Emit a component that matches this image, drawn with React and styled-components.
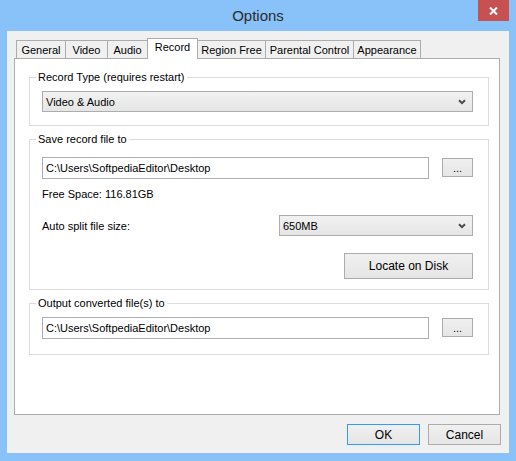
import styled, { createGlobalStyle } from 'styled-components';

const GlobalStyle = createGlobalStyle`
  html, body {
    margin: 0;
    padding: 0;
    background: #88c2f8;
  }
  body {
    font-family: "Liberation Sans", Arial, sans-serif;
    font-size: 11px;
    color: #000;
  }
`;

const Window = styled.div`
  width: 516px;
  height: 461px;
  background: #88c2f8;
  display: flex;
  flex-direction: column;
  box-sizing: border-box;
`;

const TitleBar = styled.div`
  position: relative;
  height: 31px;
  display: flex;
  align-items: center;
  justify-content: center;
  font-size: 15px;
  color: #2b2b2b;
  padding-bottom: 1px;
  box-sizing: border-box;
`;

const CloseButton = styled.div`
  position: absolute;
  top: 0;
  right: 7px;
  width: 31px;
  height: 21px;
  background: #c75050;
  display: flex;
  align-items: center;
  justify-content: center;
`;

const Client = styled.div`
  margin: 0 7px 8px 7px;
  flex: 1;
  background: #f0f0f0;
  padding: 7px 8px 8px 7px;
  display: flex;
  flex-direction: column;
  box-sizing: border-box;
`;

const TabRow = styled.div`
  display: flex;
  align-items: flex-end;
  height: 20px;
  padding-left: 2px;
  position: relative;
  z-index: 1;
`;

const Tab = styled.div`
  width: ${p => p.$w}px;
  height: ${p => (p.$active ? 21 : 18)}px;
  margin-left: -1px;
  margin-bottom: ${p => (p.$active ? -1 : 0)}px;
  box-sizing: border-box;
  border: 1px solid #acacac;
  border-bottom: none;
  background: ${p => (p.$active ? '#ffffff' : '#f0f0f0')};
  display: flex;
  justify-content: center;
  align-items: ${p => (p.$active ? 'flex-start' : 'center')};
  padding-top: ${p => (p.$active ? 2 : 0)}px;
  font-size: 11px;
  &:first-child {
    margin-left: 0;
  }
`;

const Panel = styled.div`
  height: 357px;
  margin-right: 1px;
  box-sizing: border-box;
  border: 1px solid #acacac;
  background: #fff;
  padding: 11px 0 0 14px;
  display: flex;
  flex-direction: column;
  gap: 6px;
`;

const Group = styled.fieldset`
  width: 460px;
  margin: 0;
  box-sizing: border-box;
  border: 1px solid #dcdcdc;
  padding: ${p => p.$top}px 15px ${p => p.$bottom}px 12px;
  min-inline-size: 0;
`;

const Legend = styled.legend`
  padding: 0 2px;
  margin-left: -6px;
  line-height: 14px;
  font-size: 11px;
`;

const Select = styled.div`
  height: 21px;
  width: ${p => (p.$w ? `${p.$w}px` : '100%')};
  box-sizing: border-box;
  border: 1px solid #acacac;
  background: linear-gradient(#f2f2f2, #e5e5e5);
  display: flex;
  align-items: center;
  justify-content: space-between;
  padding: 0 6px 0 3px;
`;

const Row = styled.div`
  display: flex;
  align-items: ${p => p.$align || 'center'};
  justify-content: ${p => p.$justify || 'space-between'};
  margin-top: ${p => p.$mt || 0}px;
`;

const TextBox = styled.div`
  width: 387px;
  height: 22px;
  box-sizing: border-box;
  border: 1px solid #abadb3;
  background: #fff;
  display: flex;
  align-items: center;
  padding-left: 3px;
`;

const Button = styled.div`
  width: ${p => p.$w}px;
  height: ${p => p.$h}px;
  box-sizing: border-box;
  border: 1px solid ${p => (p.$default ? '#3399ff' : '#acacac')};
  background: linear-gradient(#f0f0f0, #e5e5e5);
  display: flex;
  align-items: center;
  justify-content: center;
  font-size: ${p => p.$fs || 11}px;
  margin-top: ${p => p.$mt || 0}px;
`;

const Label = styled.div`
  line-height: 14px;
  margin-top: ${p => p.$mt || 0}px;
`;

const Footer = styled.div`
  display: flex;
  justify-content: flex-end;
  gap: 8px;
  margin-top: 9px;
`;

const Chevron = () => (
  <svg width="8" height="6" viewBox="0 0 8 6">
    <path d="M1 1.2 L4 4.2 L7 1.2" fill="none" stroke="#4a4a4a" strokeWidth="2" />
  </svg>
);

const CloseGlyph = () => (
  <svg width="9" height="8" viewBox="0 0 9 8">
    <path d="M1 0.5 L8 7.5 M8 0.5 L1 7.5" stroke="#fff" strokeWidth="2" />
  </svg>
);

const tabs = [
  ['General', 50],
  ['Video', 43],
  ['Audio', 41],
  ['Record', 51],
  ['Region Free', 69],
  ['Parental Control', 89],
  ['Appearance', 68],
];

export default function App() {
  return (
    <>
      <GlobalStyle />
      <Window>
        <TitleBar>
          Options
          <CloseButton>
            <CloseGlyph />
          </CloseButton>
        </TitleBar>
        <Client>
          <TabRow>
            {tabs.map(([name, w]) => (
              <Tab key={name} $w={w} $active={name === 'Record'}>
                {name}
              </Tab>
            ))}
          </TabRow>
          <Panel>
            <Group $top={7} $bottom={13}>
              <Legend>Record Type (requires restart)</Legend>
              <Select>
                <span>Video &amp; Audio</span>
                <Chevron />
              </Select>
            </Group>

            <Group $top={11} $bottom={10}>
              <Legend>Save record file to</Legend>
              <Row $align="flex-start">
                <TextBox>C:\Users\SoftpediaEditor\Desktop</TextBox>
                <Button $w={31} $h={19} $mt={1}>...</Button>
              </Row>
              <Label $mt={8}>Free Space: 116.81GB</Label>
              <Row $mt={14}>
                <span>Auto split file size:</span>
                <Select $w={194}>
                  <span>650MB</span>
                  <Chevron />
                </Select>
              </Row>
              <Row $mt={17} $justify="flex-end">
                <Button $w={129} $h={26} $fs={12}>Locate on Disk</Button>
              </Row>
            </Group>

            <Group $top={7} $bottom={15}>
              <Legend>Output converted file(s) to</Legend>
              <Row $align="flex-start">
                <TextBox>C:\Users\SoftpediaEditor\Desktop</TextBox>
                <Button $w={31} $h={19} $mt={1}>...</Button>
              </Row>
            </Group>
          </Panel>
          <Footer>
            <Button $w={73} $h={21} $fs={12} $default>OK</Button>
            <Button $w={73} $h={21} $fs={12}>Cancel</Button>
          </Footer>
        </Client>
      </Window>
    </>
  );
}
